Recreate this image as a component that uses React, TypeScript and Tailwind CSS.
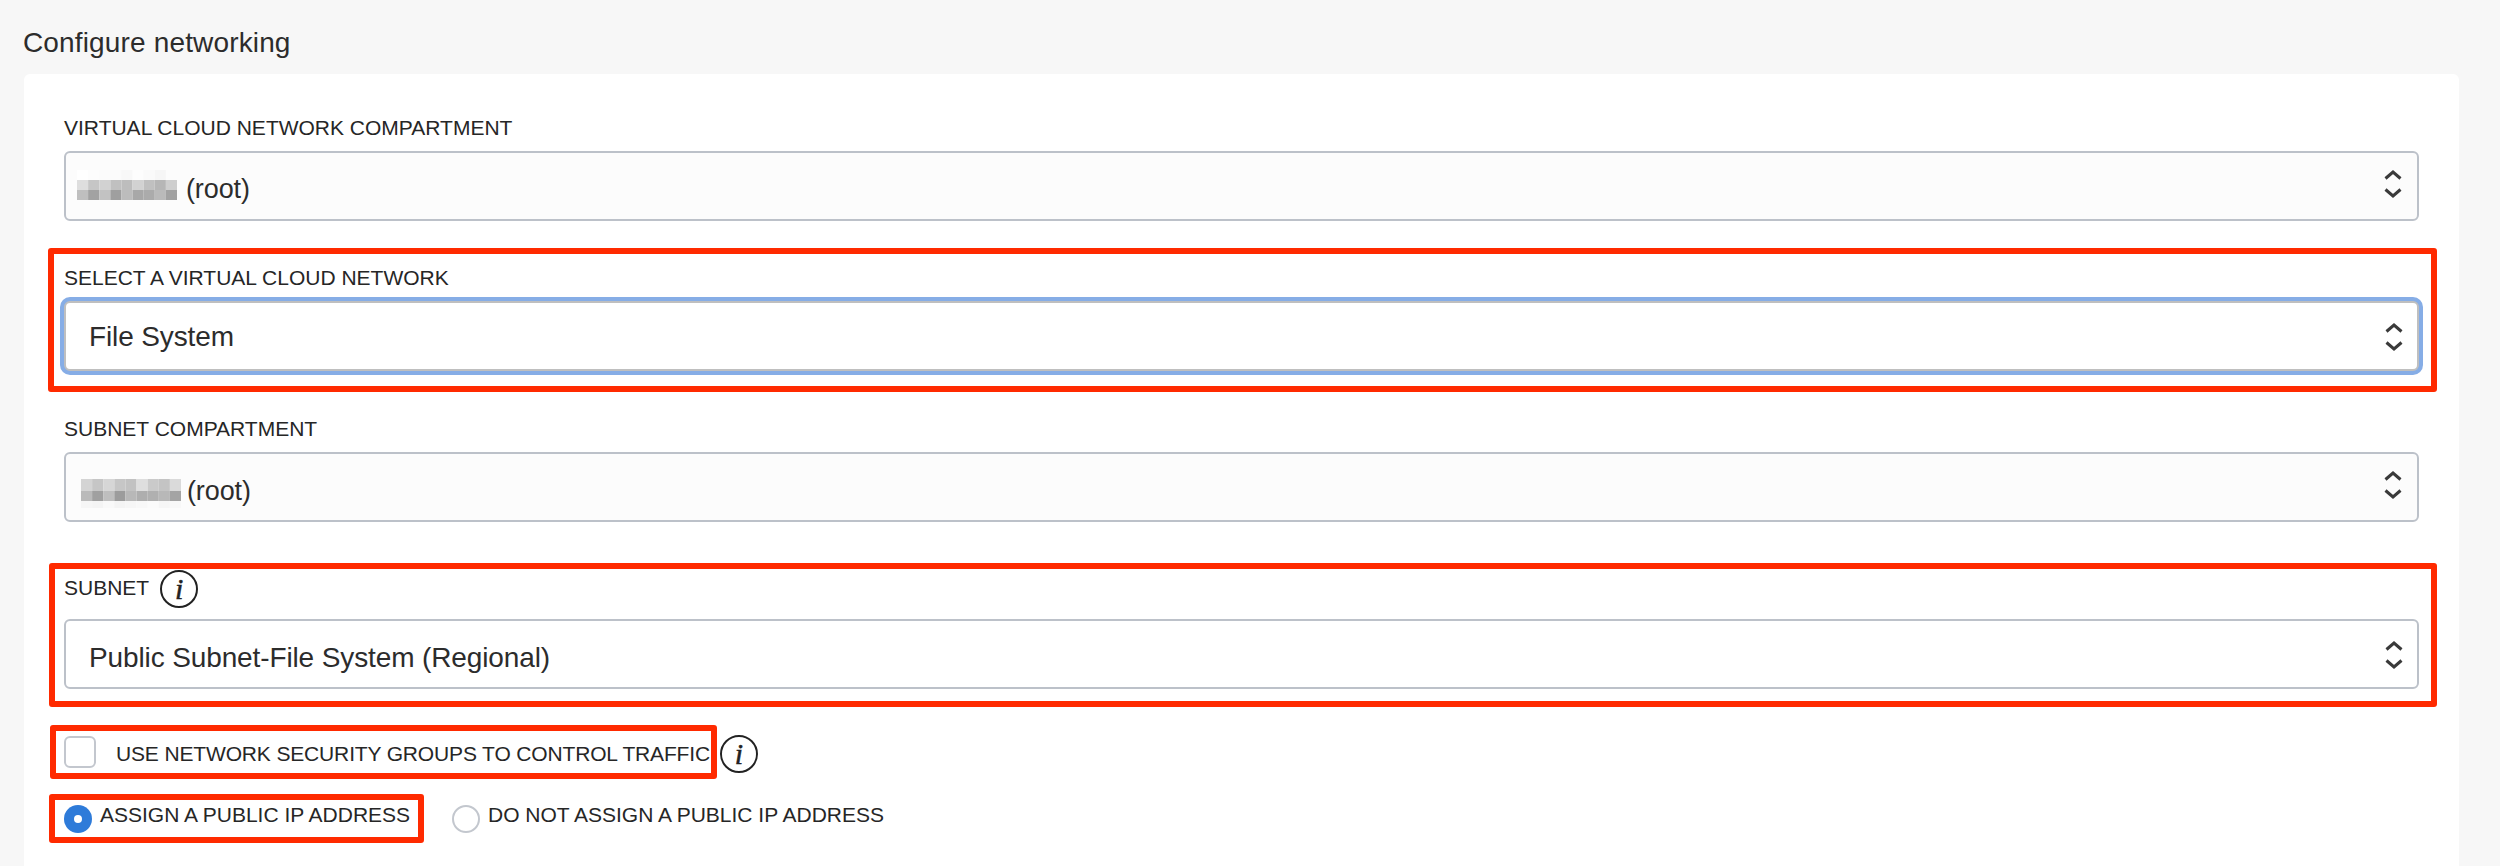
const font = { fontFamily: '"Liberation Sans", Arial, sans-serif' };

function Chevrons({ tone }: { tone?: boolean }) {
  return (
    <svg
      width="18"
      height="28"
      viewBox="0 0 18 28"
      fill="none"
      stroke="#3a3a3a"
      strokeWidth="3"
      className={`shrink-0 ${tone ? "mb-[4px]" : "mt-[2px]"}`}
    >
      <path d="M1.5 8.5 L9 2 L16.5 8.5" />
      <path d="M1.5 19.5 L9 26 L16.5 19.5" />
    </svg>
  );
}

const rowsA: [number, string[]][] = [
  [10, ["#ffffff", "#fdfdfd", "#fbfbfb", "#fbfbfb", "#f8f8f8", "#fdfdfd", "#fafafa", "#f6f6f6", "#fcfcfc"]],
  [10, ["#dedede", "#c6c6c6", "#d2d2d2", "#c0c0c0", "#bdbdbd", "#d2d2d2", "#c0c0c0", "#b6b6b6", "#cecece"]],
  [10, ["#bfbfbf", "#a2a2a2", "#c2c2c2", "#9f9f9f", "#bcbcbc", "#a8a8a8", "#ababab", "#bababa", "#a2a2a2"]],
];
const rowsB: [number, string[]][] = [
  [6, ["#fcfcfc", "#fcfcfc", "#fcfcfc", "#fcfcfc", "#fcfcfc", "#fcfcfc", "#fcfcfc", "#fcfcfc", "#fcfcfc"]],
  [12, ["#d4d4d4", "#c6c6c6", "#d6d6d6", "#c6c6c6", "#c2c2c2", "#dedede", "#cacaca", "#c4c4c4", "#dadada"]],
  [10, ["#bababa", "#a0a0a0", "#bebebe", "#9c9c9c", "#b8b8b8", "#aeaeae", "#b0b0b0", "#b8b8b8", "#a4a4a4"]],
  [7, ["#f6f6f6", "#f4f4f4", "#f9f9f9", "#f4f4f4", "#f6f6f6", "#f8f8f8", "#fbfbfb", "#f6f6f6", "#f8f8f8"]],
];

function Redacted({ rows, className }: { rows: [number, string[]][]; className: string }) {
  let y = 0;
  const h = rows.reduce((s, r) => s + r[0], 0);
  return (
    <svg width="100" height={h} viewBox={`0 0 99 ${h}`} preserveAspectRatio="none" className={`shrink-0 ${className}`}>
      {rows.map(([rh, r], j) => {
        const top = y;
        y += rh;
        return r.map((c, x) => <rect key={`${x}-${j}`} x={x * 11} y={top} width="11" height={rh} fill={c} />);
      })}
    </svg>
  );
}

function Info() {
  return (
    <span className="flex h-[38px] w-[38px] shrink-0 items-center justify-center rounded-full border-2 border-[#222] bg-white text-[30px] leading-none text-[#222] italic [-webkit-text-stroke:0.5px_#222] [font-family:'Liberation_Serif',serif]">
      i
    </span>
  );
}

function Field({ children, focus, tone }: { children: React.ReactNode; focus?: boolean; tone?: boolean }) {
  return (
    <div
      className={`flex h-[70px] items-center justify-between rounded-[6px] border-2 text-[28px] tracking-[-0.12px] text-[#2c2c2c] ${
        tone ? "border-[#bcc1c9] bg-[#fcfcfc] pr-[15px]" : "bg-white pr-[14px]"
      } ${focus ? "border-[#bfbfbf] shadow-[0_0_0_4px_#86ade6]" : !tone ? "border-[#bcc1c9]" : ""}`}
    >
      {children}
      <Chevrons tone={tone} />
    </div>
  );
}

function Label({ children }: { children: React.ReactNode }) {
  return <div className="h-6 pt-[1px] text-[21px] leading-6 text-[#262626] uppercase">{children}</div>;
}

export default function App() {
  return (
    <div style={font} className="h-[866px] overflow-hidden bg-[#f7f7f7]">
      <h1 className="h-[74px] pt-[28px] pl-[23px] text-[28px] leading-[30px] font-normal tracking-[0.15px] text-[#2c2c2c]">
        Configure networking
      </h1>
      <div className="ml-[24px] h-[800px] w-[2435px] rounded-t-[6px] bg-white pt-[41px] pr-[40px] pl-[40px]">
        <Label>Virtual Cloud Network Compartment</Label>
        <div className="mt-3">
          <Field tone>
            <span className="flex items-center pl-[11px]">
              <Redacted rows={rowsA} className="mb-[2px]" />
              <span className="mt-[6px] ml-[9px] text-[27px]">(root)</span>
            </span>
          </Field>
        </div>

        <div className="mt-[27px] -mr-[18px] -ml-[16px] rounded-[3px] border-[6px] border-[#ff2a00] pt-[11px] pr-3 pb-[15px] pl-[10px]">
          <Label>Select a Virtual Cloud Network</Label>
          <div className="mt-3">
            <Field focus>
              <span className="mt-[2px] pl-[23px]">File System</span>
            </Field>
          </div>
        </div>

        <div className="mt-[24px]">
          <Label>Subnet Compartment</Label>
          <div className="mt-3">
            <Field tone>
              <span className="flex items-center pl-[15px]">
                <Redacted rows={rowsB} className="mt-[6px]" />
                <span className="mt-[8px] ml-[6px] text-[27px]">(root)</span>
              </span>
            </Field>
          </div>
        </div>

        <div className="mt-[41px] -mr-[18px] -ml-[15px] rounded-[3px] border-[6px] border-[#ff2a00] pr-3 pb-[12px] pl-[9px]">
          <div className="flex h-[50px] items-start gap-[11px] pt-[1px]">
            <span className="h-[36px] text-[21px] leading-[36px] text-[#262626] uppercase">Subnet</span>
            <Info />
          </div>
          <Field>
            <span className="mt-[8px] pl-[23px]">Public Subnet-File System (Regional)</span>
          </Field>
        </div>

        <div className="mt-[18px] -ml-[14px] flex items-center">
          <div className="flex h-[54px] w-[667px] items-center rounded-[3px] border-[6px] border-[#ff2a00] pl-[8px]">
            <span className="h-[32px] w-[32px] shrink-0 rounded-[6px] border-2 border-[#c3c7ce] bg-white" />
            <span className="mt-[4px] ml-[20px] text-[21px] tracking-[-0.15px] whitespace-nowrap text-[#262626] uppercase">
              Use network security groups to control traffic
            </span>
          </div>
          <span className="mt-[4px] ml-[3px]">
            <Info />
          </span>
        </div>

        <div className="mt-[15px] -ml-[15px] flex items-center">
          <div className="flex h-[49px] w-[375px] items-center rounded-[3px] border-[6px] border-[#ff2a00] pl-[9px]">
            <span className="flex h-[28px] w-[28px] shrink-0 items-center justify-center rounded-full bg-[#2e7bd9]">
              <span className="h-2 w-2 rounded-full bg-white" />
            </span>
            <span className="mb-[8px] ml-[8px] text-[21px] whitespace-nowrap text-[#262626] uppercase">
              Assign a public IP address
            </span>
          </div>
          <span className="ml-[28px] h-[28px] w-[28px] shrink-0 rounded-full border-2 border-[#c3c7ce] bg-white" />
          <span className="mb-[8px] ml-[8px] text-[21px] whitespace-nowrap text-[#262626] uppercase">
            Do not assign a public IP address
          </span>
        </div>
      </div>
    </div>
  );
}
